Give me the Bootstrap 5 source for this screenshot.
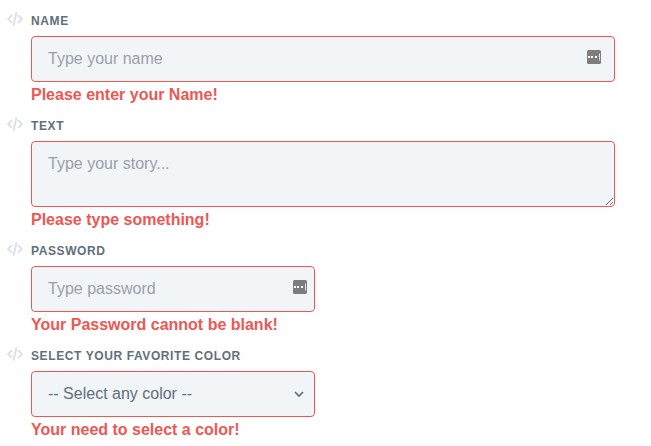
<!DOCTYPE html>
<html lang="en">
<head>
<meta charset="utf-8">
<meta name="viewport" content="width=device-width, initial-scale=1">
<title>Form validation</title>
<link href="https://cdn.jsdelivr.net/npm/bootstrap@5.3.0/dist/css/bootstrap.min.css" rel="stylesheet">
<style>
  body { font-family: "Liberation Sans", Arial, sans-serif; font-size: 16px; line-height: 24px; color: #606f7b; background: #fff; }
  .demo-form { padding: 2px 36px 0 7px; }
  .code-icon { width: 16px; height: 16px; margin-bottom: 4px; color: #dae1e7; }
  .field-head { padding: 9px 0 5px; line-height: 20px; }
  .field-label { font-size: 12px; font-weight: 700; letter-spacing: .05em; color: #606f7b; }
  .field-body { padding-left: 24px; }
  .demo-form .form-control, .demo-form .form-select {
    padding: 10px 16px; border: 1px solid #ef5753; border-radius: 4px;
    background-color: #f1f5f8; color: #606f7b; font-size: 16px; line-height: 24px;
  }
  .demo-form .form-control::placeholder { color: #9a9fa8; }
  .demo-form textarea.form-control { display: block; height: 66px; min-height: 66px; }
  .demo-form .form-select { background-image: none; }
  .field-mark { position: absolute; right: 14px; top: 14px; pointer-events: none; }
  .half-field .field-mark { right: 8px; }
  .select-arrow { position: absolute; right: 11px; top: 20px; pointer-events: none; }
  .field-error { color: #ef5753; font-weight: 700; line-height: 25px; }
</style>
</head>
<body>
<svg class="d-none" aria-hidden="true">
  <symbol id="code" viewBox="0 0 16 16">
    <path d="M4.9 4.2 1.1 8l3.8 3.8M11.1 4.2 14.9 8l-3.8 3.8M9.6 1.3 6.4 14.7" fill="none" stroke="currentColor" stroke-width="1.9"/>
  </symbol>
  <symbol id="keypad" viewBox="0 0 14 14">
    <rect width="14" height="14" rx="1.5" fill="#7d7d7d"/>
    <path d="M1 6h2v2H1zM4 6h2v2H4zM8 6h2v2H8z" fill="#fff"/>
    <path d="M12 3.5h1v7h-1z" fill="#f3dddd"/>
  </symbol>
</svg>
<form class="demo-form" novalidate>
  <div>
    <div class="field-head d-flex align-items-center gap-2">
      <svg class="code-icon" aria-hidden="true"><use href="#code"/></svg>
      <label class="field-label text-uppercase" for="name">Name</label>
    </div>
    <div class="field-body">
      <div class="position-relative">
        <input class="form-control" type="text" id="name" placeholder="Type your name">
        <svg class="field-mark" width="14" height="14" aria-hidden="true"><use href="#keypad"/></svg>
      </div>
      <div class="field-error">Please enter your Name!</div>
    </div>
  </div>
  <div>
    <div class="field-head d-flex align-items-center gap-2">
      <svg class="code-icon" aria-hidden="true"><use href="#code"/></svg>
      <label class="field-label text-uppercase" for="story">Text</label>
    </div>
    <div class="field-body">
      <textarea class="form-control" id="story" rows="2" placeholder="Type your story..."></textarea>
      <div class="field-error">Please type something!</div>
    </div>
  </div>
  <div>
    <div class="field-head d-flex align-items-center gap-2">
      <svg class="code-icon" aria-hidden="true"><use href="#code"/></svg>
      <label class="field-label text-uppercase" for="password">Password</label>
    </div>
    <div class="field-body">
      <div class="row gx-3">
        <div class="col-6">
          <div class="position-relative half-field">
            <input class="form-control" type="password" id="password" placeholder="Type password">
            <svg class="field-mark" width="14" height="14" aria-hidden="true"><use href="#keypad"/></svg>
          </div>
          <div class="field-error">Your Password cannot be blank!</div>
        </div>
      </div>
    </div>
  </div>
  <div>
    <div class="field-head d-flex align-items-center gap-2">
      <svg class="code-icon" aria-hidden="true"><use href="#code"/></svg>
      <label class="field-label text-uppercase" for="color">Select your favorite color</label>
    </div>
    <div class="field-body">
      <div class="row gx-3">
        <div class="col-6">
          <div class="position-relative half-field">
            <select class="form-select" id="color">
              <option>-- Select any color --</option>
              <option>Red</option>
              <option>Green</option>
              <option>Blue</option>
            </select>
            <svg class="select-arrow" width="10" height="7" viewBox="0 0 10 7" aria-hidden="true"><path d="M1 1l4 4 4-4" fill="none" stroke="#606f7b" stroke-width="1.7"/></svg>
          </div>
          <div class="field-error">Your need to select a color!</div>
        </div>
      </div>
    </div>
  </div>
</form>
<script src="https://cdn.jsdelivr.net/npm/bootstrap@5.3.0/dist/js/bootstrap.bundle.min.js"></script>
</body>
</html>
